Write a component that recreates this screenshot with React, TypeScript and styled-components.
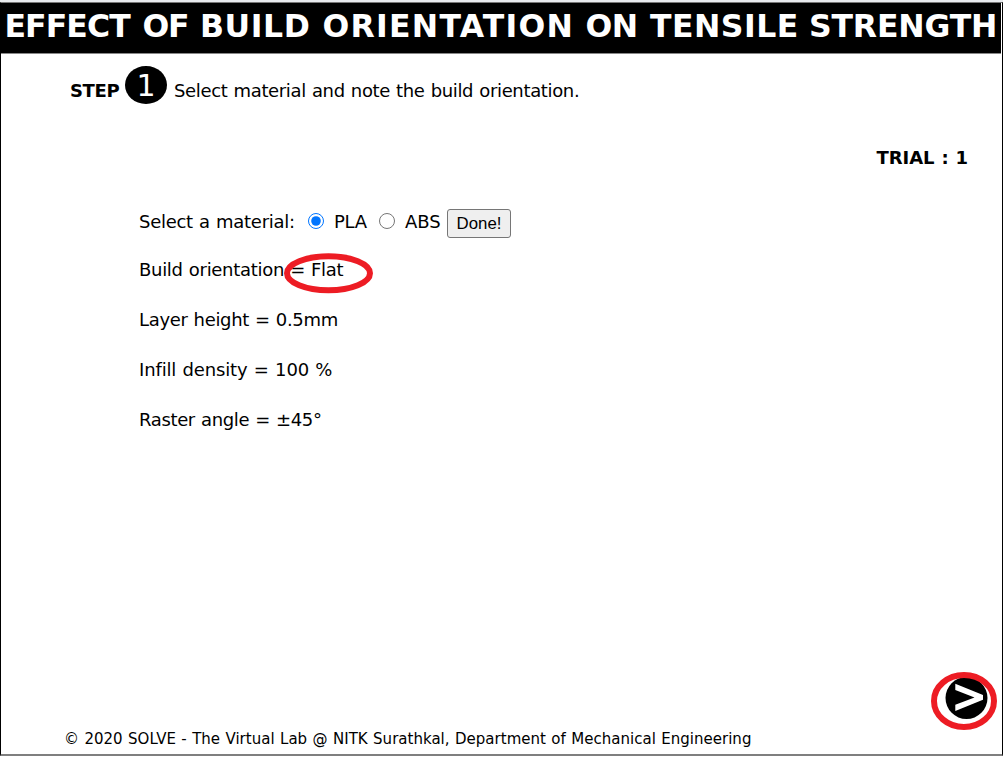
import React from 'react';
import styled, { createGlobalStyle } from 'styled-components';

const Global = createGlobalStyle`
  *{box-sizing:border-box}
  body{margin:0;background:#fff;color:#000;font-family:"DejaVu Sans",Verdana,sans-serif}
`;

const Page = styled.div`
  width: 1003px;
  height: 761px;
  border-top: 2px solid #e8eaed;
`;
const Frame = styled.main`
  height: 754px;
  border: 1px solid #000;
  border-top-color: #777;
  border-bottom: 2px solid #7f7f7f;
  display: flex;
  flex-direction: column;
`;
const Header = styled.header`
  flex: none;
  height: 51px;
  margin-right: 1px;
  padding-left: 3.5px;
  background: #000;
  border-bottom: 1px solid #888;
  color: #fff;
`;
const Line = styled.span<{ $size?: number; $bold?: boolean; $spacing?: number }>`
  display: block;
  white-space: pre;
  font-size: ${p => p.$size ?? 18}px;
  font-weight: ${p => (p.$bold ? 700 : 400)};
  letter-spacing: ${p => p.$spacing ?? -0.3}px;
  word-spacing: 0.04em;
  line-height: 24px;
`;
const Title = styled.h1`
  display: flex;
  margin: 0;
  white-space: pre;
  font-size: 31.5px;
  line-height: 46px;
`;
const Word = styled.span<{ $width: number; $spacing: number }>`
  flex: none;
  width: ${p => p.$width}px;
  letter-spacing: ${p => p.$spacing}px;
`;
const StepRow = styled.div`
  display: flex;
  align-items: flex-start;
  padding: 12px 0 0 69px;
  height: 92px;
`;
const StepLabel = styled.div<{ $width: number }>`
  width: ${p => p.$width}px;
  padding-top: 13px;
`;
const StepNumber = styled.div`
  width: 42px;
  height: 38px;
  margin-right: 7px;
  border-radius: 50%;
  background: #000;
  color: #fff;
  font-size: 30px;
  line-height: 40px;
  text-align: center;
`;
const Trial = styled.div`
  display: flex;
  justify-content: flex-end;
  padding-right: 34px;
  height: 64px;
`;
const Parameters = styled.section`
  display: flex;
  flex-direction: column;
  padding-left: 138px;
  gap: 26px;
`;
const MaterialRow = styled.div`
  display: flex;
  height: 24px;
`;
const Cell = styled.label<{ $width: number }>`
  width: ${p => p.$width}px;
`;
const Radio = styled.input`
  width: 16px;
  height: 16px;
  margin: 3px 10px 0 0;
`;
const Done = styled.button`
  width: 64px;
  height: 29px;
  margin-top: -1px;
  padding: 0;
  border: 1px solid #767676;
  border-radius: 3px;
  background: #efefef;
  color: #000;
  font: 16.8px/25px "Liberation Sans", Arial, sans-serif;
`;
const Orientation = styled.div`
  position: relative;
  margin-top: -2px;
`;
const Mark = styled.svg`
  position: absolute;
  left: 145px;
  top: -5px;
`;
const Footer = styled.footer`
  display: flex;
  justify-content: space-between;
  margin-top: auto;
  padding: 0 5px 0 63px;
`;
const Copyright = styled.div`
  padding-top: 55px;
`;
const Next = styled.svg`
  display: block;
  margin-bottom: 24px;
`;

const titleWords = [
  { text: 'EFFECT ', width: 138, spacing: -0.9 },
  { text: 'OF ', width: 57.5, spacing: -1.2 },
  { text: 'BUILD ', width: 122.5, spacing: 0.6 },
  { text: 'ORIENTATION ', width: 263, spacing: 1.25 },
  { text: 'ON ', width: 64.5, spacing: -0.5 },
  { text: 'TENSILE ', width: 159, spacing: 0.5 },
  { text: 'STRENGTH', width: 190, spacing: -0.15 },
];

export default function App() {
  return (
    <Page>
      <Global />
      <Frame>
        <Header>
          <Title>
            {titleWords.map(w => (
              <Word key={w.text} $width={w.width} $spacing={w.spacing}>{w.text}</Word>
            ))}
          </Title>
        </Header>
        <StepRow>
          <StepLabel $width={55}><Line $bold $spacing={-0.35}>STEP</Line></StepLabel>
          <StepNumber>1</StepNumber>
          <StepLabel $width={420}><Line $spacing={-0.35}>Select material and note the build orientation.</Line></StepLabel>
        </StepRow>
        <Trial><Line $bold $spacing={-0.05}>TRIAL : 1</Line></Trial>
        <Parameters>
          <MaterialRow>
            <Cell as="div" $width={169}><Line $spacing={-0.27}>Select a material:</Line></Cell>
            <Radio type="radio" name="material" defaultChecked />
            <Cell $width={45}><Line>PLA</Line></Cell>
            <Radio type="radio" name="material" />
            <Cell $width={42}><Line $spacing={-0.1}>ABS</Line></Cell>
            <Done>Done!</Done>
          </MaterialRow>
          <Orientation>
            <Line>Build orientation = Flat</Line>
            <Mark width="90" height="41"><ellipse cx="44.5" cy="20.2" rx="41.5" ry="17" fill="none" stroke="#ed1c24" strokeWidth="6" /></Mark>
          </Orientation>
          <Line $spacing={-0.34}>Layer height = 0.5mm</Line>
          <Line $spacing={-0.14}>Infill density = 100 %</Line>
          <Line $spacing={-0.36}>Raster angle = ±45°</Line>
        </Parameters>
        <Footer>
          <Copyright><Line $size={15} $spacing={0.02}>© 2020 SOLVE - The Virtual Lab @ NITK Surathkal, Department of Mechanical Engineering</Line></Copyright>
          <Next width="66" height="58" viewBox="931 672 66 58">
            <circle cx="966.5" cy="698" r="21" />
            <path d="M955.3 683.7L983 695V699.8L955.3 711V704.7L974.5 697.4L955.3 690Z" fill="#fff" />
            <ellipse cx="964" cy="701" rx="30" ry="26" fill="none" stroke="#ed1c24" strokeWidth="6" />
          </Next>
        </Footer>
      </Frame>
    </Page>
  );
}
